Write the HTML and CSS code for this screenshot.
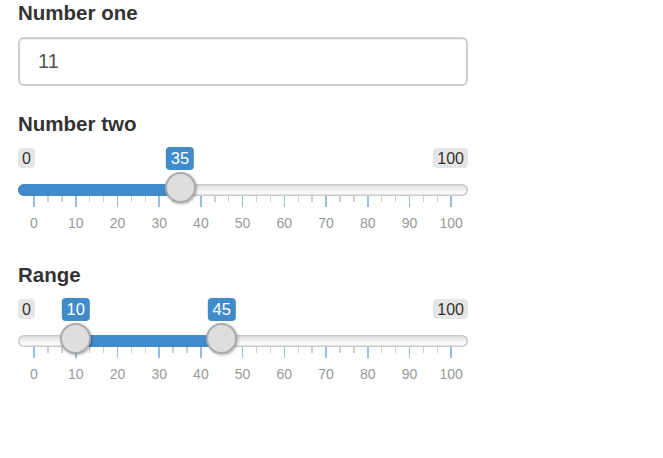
FILE: index.html
```html
<!DOCTYPE html>
<html>
<head>
<meta charset="utf-8">
<link rel="stylesheet" href="styles.css">
</head>
<body>
<div class="page">
  <div class="field field-first">
    <label class="lbl">Number one</label>
    <input class="num" type="number" value="11">
  </div>

  <div class="field">
    <label class="lbl">Number two</label>
    <div class="irs">
      <div class="irs-top">
        <span class="irs-minmax">0</span>
        <span class="irs-minmax">100</span>
        <span class="irs-single" style="--p:35">35</span>
      </div>
      <div class="irs-line">
        <span class="irs-bar irs-bar-single" style="--p:35"></span>
        <span class="irs-handle" style="--p:35"></span>
      </div>
      <div class="irs-grid">
        <i class="t big"></i><i class="t"></i><i class="t"></i>
        <i class="t big"></i><i class="t"></i><i class="t"></i>
        <i class="t big"></i><i class="t"></i><i class="t"></i>
        <i class="t big"></i><i class="t"></i><i class="t"></i>
        <i class="t big"></i><i class="t"></i><i class="t"></i>
        <i class="t big"></i><i class="t"></i><i class="t"></i>
        <i class="t big"></i><i class="t"></i><i class="t"></i>
        <i class="t big"></i><i class="t"></i><i class="t"></i>
        <i class="t big"></i><i class="t"></i><i class="t"></i>
        <i class="t big"></i><i class="t"></i><i class="t"></i>
        <i class="t big"></i>
      </div>
      <div class="irs-grid-text">
        <span>0</span><span>10</span><span>20</span><span>30</span><span>40</span><span>50</span><span>60</span><span>70</span><span>80</span><span>90</span><span>100</span>
      </div>
    </div>
  </div>

  <div class="field">
    <label class="lbl">Range</label>
    <div class="irs">
      <div class="irs-top">
        <span class="irs-minmax">0</span>
        <span class="irs-minmax">100</span>
        <span class="irs-single" style="--p:10">10</span>
        <span class="irs-single" style="--p:45">45</span>
      </div>
      <div class="irs-line">
        <span class="irs-bar irs-bar-range" style="--from:10;--to:45"></span>
        <span class="irs-handle" style="--p:10"></span>
        <span class="irs-handle" style="--p:45"></span>
      </div>
      <div class="irs-grid">
        <i class="t big"></i><i class="t"></i><i class="t"></i>
        <i class="t big"></i><i class="t"></i><i class="t"></i>
        <i class="t big"></i><i class="t"></i><i class="t"></i>
        <i class="t big"></i><i class="t"></i><i class="t"></i>
        <i class="t big"></i><i class="t"></i><i class="t"></i>
        <i class="t big"></i><i class="t"></i><i class="t"></i>
        <i class="t big"></i><i class="t"></i><i class="t"></i>
        <i class="t big"></i><i class="t"></i><i class="t"></i>
        <i class="t big"></i><i class="t"></i><i class="t"></i>
        <i class="t big"></i><i class="t"></i><i class="t"></i>
        <i class="t big"></i>
      </div>
      <div class="irs-grid-text">
        <span>0</span><span>10</span><span>20</span><span>30</span><span>40</span><span>50</span><span>60</span><span>70</span><span>80</span><span>90</span><span>100</span>
      </div>
    </div>
  </div>
</div>
</body>
</html>
```

FILE: styles.css
```css
html, body {
  margin: 0;
  padding: 0;
  background: #fff;
}
body {
  font-family: "Liberation Sans", Arial, sans-serif;
  color: #333;
}
.page {
  width: 450px;
  margin-left: 18px;
  padding-top: 1px;
}
.field {
  margin-bottom: 32px;
}
.field-first {
  margin-bottom: 26px;
}
.lbl {
  display: block;
  font-weight: bold;
  font-size: 20.5px;
  line-height: 24px;
  height: 24px;
  color: #333;
}
.num {
  display: block;
  box-sizing: border-box;
  width: 450px;
  height: 49px;
  margin: 12px 0 0 0;
  padding: 0 18px;
  border: 2px solid #cdcdcd;
  border-radius: 6px;
  box-shadow: inset 0 1px 1px rgba(0,0,0,0.075);
  font-family: "Liberation Sans", Arial, sans-serif;
  font-size: 20px;
  color: #555;
  outline: none;
  -moz-appearance: textfield;
}
.num::-webkit-inner-spin-button,
.num::-webkit-outer-spin-button {
  -webkit-appearance: none;
  margin: 0;
}

.irs {
  --u: 4.173px;
}
.irs-top {
  position: relative;
  display: flex;
  justify-content: space-between;
  align-items: flex-start;
  padding-top: 12px;
  height: 20px;
}
.irs-minmax {
  display: block;
  height: 20px;
  line-height: 21px;
  padding: 0 4px;
  border-radius: 4px;
  background: #e6e6e6;
  color: #333;
  font-size: 16px;
}
.irs-single {
  position: absolute;
  top: 11px;
  left: calc(16px + var(--p) * var(--u));
  transform: translateX(-50%);
  height: 23px;
  line-height: 23px;
  padding: 0 5px;
  border-radius: 4px;
  background: #428bca;
  color: #fff;
  font-size: 16.5px;
}
.irs-line {
  position: relative;
  margin-top: 16px;
  height: 12px;
  border-radius: 6px;
  background: linear-gradient(to bottom, #dcdcdc 0%, #f6f6f6 60%, #fdfdfd 100%);
  box-shadow: inset 0 0 0 1.5px #cacaca;
}
.irs-bar {
  position: absolute;
  top: 0;
  height: 12px;
  background: #428bca;
}
.irs-bar-single {
  left: 0;
  width: calc(16px + var(--p) * var(--u));
  border-radius: 6px 0 0 6px;
}
.irs-bar-range {
  left: calc(16px + var(--from) * var(--u));
  width: calc((var(--to) - var(--from)) * var(--u));
}
.irs-handle {
  position: absolute;
  box-sizing: border-box;
  top: -12px;
  left: calc(16px + var(--p) * var(--u) - 15.5px);
  width: 31px;
  height: 31px;
  border-radius: 50%;
  background: #dedede;
  border: 2px solid #acacac;
  box-shadow: 1px 1px 3px rgba(0,0,0,0.3);
}
.irs-grid {
  display: flex;
  justify-content: space-between;
  align-items: flex-start;
  width: 419px;
  margin-left: 15.3px;
  height: 11px;
}
.t {
  display: block;
  width: 1.5px;
  height: 6px;
  background: #cfcfcf;
}
.t.big {
  height: 11px;
  background: #98bfe3;
}
.irs-grid-text {
  display: flex;
  justify-content: space-between;
  width: 417.3px;
  margin-left: 16px;
  margin-top: 8px;
  height: 16px;
  line-height: 16px;
  font-size: 14px;
  color: #999;
}
.irs-grid-text span {
  display: flex;
  justify-content: center;
  width: 0;
  white-space: nowrap;
}
```
